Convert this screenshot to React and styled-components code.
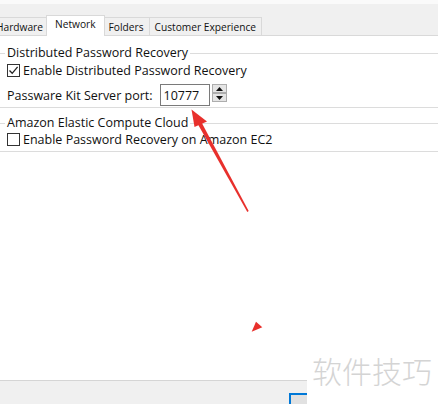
import React from "react";
import styled, { createGlobalStyle } from "styled-components";

const Global = createGlobalStyle`
  html, body { margin: 0; padding: 0; background: #fff; }
  body { font-family: "Open Sans", "Noto Sans", sans-serif; }
  * { box-sizing: border-box; }
`;

const Frame = styled.div`
  position: relative;
  width: 438px;
  height: 404px;
  overflow: hidden;
  background: #fff;
  display: flex;
  flex-direction: column;
  font-size: 12.5px;
  color: #111;
`;

const TopGap = styled.div`
  height: 4px;
  background: #fafafa;
`;

const TabStrip = styled.div`
  height: 32px;
  background: #f0f0f0;
  border-bottom: 1px solid #d9d9d9;
  display: flex;
  align-items: flex-end;
  margin-left: -10px;
  font-size: 10.2px;
`;

const Tab = styled.div`
  position: relative;
  height: ${(p) => (p.$active ? "21px" : "18px")};
  margin: 0 ${(p) => (p.$active ? "-2px" : "-1px")} ${(p) => (p.$active ? "-1px" : "0")} ${(p) => (p.$active ? "-2px" : "0")};
  padding: ${(p) => (p.$active ? "2px 8px 0" : "3px 5px 0")};
  border: 1px solid #d9d9d9;
  border-bottom: none;
  background: ${(p) => (p.$active ? "#fff" : "#f0f0f0")};
  z-index: ${(p) => (p.$active ? 2 : 1)};
  line-height: 13px;
  white-space: nowrap;
`;

const Content = styled.div`
  display: flex;
  flex-direction: column;
  flex: 1;
`;

const Group = styled.div`
  margin-top: ${(p) => p.$top}px;
  padding-bottom: ${(p) => p.$bottom}px;
  border-bottom: 1px solid #dcdcdc;
  display: flex;
  flex-direction: column;
`;

const GroupHeader = styled.div`
  height: 14px;
  display: flex;
  align-items: center;
`;

const Rule = styled.div`
  height: 1px;
  background: #dcdcdc;
  width: ${(p) => (p.$grow ? "auto" : "5px")};
  flex: ${(p) => (p.$grow ? 1 : "none")};
`;

const GroupTitle = styled.span`
  padding: 0 2px;
  line-height: 14px;
  white-space: nowrap;
`;

const Row = styled.div`
  display: flex;
  align-items: center;
  height: ${(p) => p.$h}px;
  margin-top: ${(p) => p.$top}px;
  padding-left: 7px;
  white-space: nowrap;
`;

const Box = styled.span`
  width: 13px;
  height: 13px;
  border: 1px solid #333;
  background: #fff;
  display: inline-flex;
  align-items: center;
  justify-content: center;
  margin-right: 3px;
  flex: none;
`;

const Label = styled.span`
  margin-right: 7px;
`;

const Input = styled.div`
  width: 50px;
  height: 22px;
  border: 1px solid #7a7a7a;
  background: #fff;
  padding-left: 3px;
  display: flex;
  align-items: center;
  font-size: 12.5px;
`;

const Spinner = styled.div`
  margin-left: 2px;
  align-self: flex-start;
  display: flex;
  flex-direction: column;
  width: 15px;
`;

const SpinButton = styled.div`
  height: 9px;
  border: 1px solid #adadad;
  background: #e5e5e5;
  display: flex;
  align-items: center;
  justify-content: center;
`;

const Spacer = styled.div`
  flex: 1;
`;

const Footer = styled.div`
  height: 24px;
  border-top: 1px solid #d5d5d5;
  background: #f0f0f0;
  display: flex;
  padding: 12px 0 0 289px;
  overflow: hidden;
`;

const FooterButton = styled.div`
  width: 90px;
  height: 22px;
  flex: none;
  border: 2px solid #0078d7;
  background: #e1e1e1;
`;

const Watermark = styled.div`
  position: absolute;
  left: 307px;
  top: 350px;
  right: 0;
  bottom: 0;
  background: #fff;
  padding: 4px 0 0 5px;
  font-family: "Noto Sans CJK SC", sans-serif;
  font-weight: 300;
  font-size: 30px;
  line-height: 32px;
  color: #d4d4d4;
  white-space: nowrap;
`;

const Overlay = styled.svg`
  position: absolute;
  left: 0;
  top: 0;
  pointer-events: none;
`;

const Check = () => (
  <svg width="11" height="11" viewBox="0 0 11 11">
    <path d="M1.5 5.5 L4.2 8.3 L9.6 1.8" fill="none" stroke="#222" strokeWidth="1.3" />
  </svg>
);

const Tri = ({ down }) => (
  <svg width="7" height="4" viewBox="0 0 7 4">
    <path d={down ? "M0 0 H7 L3.5 4 Z" : "M0 4 H7 L3.5 0 Z"} fill="#111" />
  </svg>
);

export default function App() {
  return (
    <>
      <Global />
      <Frame>
        <TopGap />
        <TabStrip>
          <Tab>Hardware</Tab>
          <Tab $active>Network</Tab>
          <Tab>Folders</Tab>
          <Tab>Customer Experience</Tab>
        </TabStrip>
        <Content>
          <Group $top={10} $bottom={1}>
            <GroupHeader>
              <Rule />
              <GroupTitle>Distributed Password Recovery</GroupTitle>
              <Rule $grow />
            </GroupHeader>
            <Row $h={16} $top={2}>
              <Box>
                <Check />
              </Box>
              Enable Distributed Password Recovery
            </Row>
            <Row $h={22} $top={6}>
              <Label>Passware Kit Server port:</Label>
              <Input>10777</Input>
              <Spinner>
                <SpinButton>
                  <Tri />
                </SpinButton>
                <SpinButton>
                  <Tri down />
                </SpinButton>
              </Spinner>
            </Row>
          </Group>
          <Group $top={8} $bottom={4}>
            <GroupHeader>
              <Rule />
              <GroupTitle>Amazon Elastic Compute Cloud</GroupTitle>
              <Rule $grow />
            </GroupHeader>
            <Row $h={16} $top={1}>
              <Box />
              Enable Password Recovery on Amazon EC2
            </Row>
          </Group>
          <Spacer />
          <Footer>
            <FooterButton />
          </Footer>
        </Content>
        <Overlay width="438" height="404" viewBox="0 0 438 404">
          <polygon points="197.2,123 200.8,121 248.7,211.1 247.3,211.9" fill="#e8302c" />
          <polygon points="191.5,109.5 207,121.5 194.5,127" fill="#e8302c" />
          <polygon points="256,321.7 262.3,327.3 251.7,331.7" fill="#e8302c" />
        </Overlay>
        <Watermark>软件技巧</Watermark>
      </Frame>
    </>
  );
}
